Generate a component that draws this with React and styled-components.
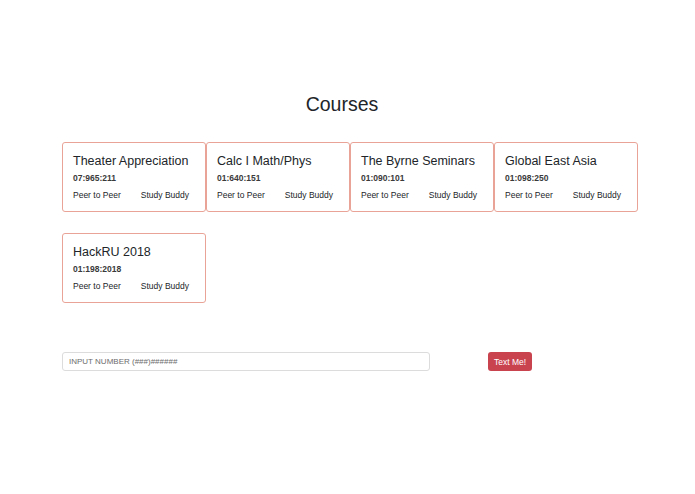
import React from "react";
import styled, { createGlobalStyle } from "styled-components";

const GlobalStyle = createGlobalStyle`
  html, body {
    margin: 0;
    padding: 0;
    background: #fff;
    font-family: "Liberation Sans", Arial, sans-serif;
    color: #212529;
  }
`;

const courses = [
  { name: "Theater Appreciation", code: "07:965:211" },
  { name: "Calc I Math/Phys", code: "01:640:151" },
  { name: "The Byrne Seminars", code: "01:090:101" },
  { name: "Global East Asia", code: "01:098:250" },
  { name: "HackRU 2018", code: "01:198:2018" }
];

const Page = styled.div`
  width: 576px;
  margin: 0 0 0 62px;
  padding-top: 92px;
`;

const Title = styled.h1`
  margin: 0 0 25px;
  padding-right: 16px;
  text-align: center;
  font-size: 19.5px;
  font-weight: 400;
  line-height: 25px;
`;

const Grid = styled.div`
  display: grid;
  grid-template-columns: repeat(4, 144px);
  row-gap: 21px;
`;

const Card = styled.div`
  height: 70px;
  box-sizing: border-box;
  border: 1px solid #e9a497;
  border-radius: 3px;
  padding: 10px 10px 0;
`;

const CardTitle = styled.div`
  font-size: 12.5px;
  line-height: 16px;
  font-weight: 400;
  margin-bottom: 3px;
`;

const Code = styled.div`
  font-size: 8.5px;
  font-weight: 700;
  color: #3a3a3a;
  line-height: 12px;
  margin-bottom: 5px;
`;

const Links = styled.div`
  display: flex;
  justify-content: space-between;
  padding-right: 6px;
  font-size: 8.5px;
  line-height: 12px;
`;

const Form = styled.div`
  display: flex;
  align-items: center;
  margin-top: 49px;
`;

const Input = styled.input`
  width: 368px;
  height: 19px;
  box-sizing: border-box;
  border: 1px solid #dcdcdc;
  border-radius: 3px;
  padding: 0 6px;
  font-family: inherit;
  font-size: 8px;
  color: #495057;
  &::placeholder {
    color: #6c6c6c;
  }
`;

const Button = styled.button`
  margin-left: 58px;
  height: 19px;
  box-sizing: border-box;
  border: none;
  border-radius: 3px;
  padding: 0 6px;
  background: #c9434f;
  color: #fff;
  font-family: inherit;
  font-size: 8.5px;
`;

const CourseCard = ({ name, code }) => (
  <Card>
    <CardTitle>{name}</CardTitle>
    <Code>{code}</Code>
    <Links>
      <span>Peer to Peer</span>
      <span>Study Buddy</span>
    </Links>
  </Card>
);

export default function App() {
  return (
    <>
      <GlobalStyle />
      <Page>
        <Title>Courses</Title>
        <Grid>
          {courses.map(c => (
            <CourseCard key={c.code} {...c} />
          ))}
        </Grid>
        <Form>
          <Input placeholder="INPUT NUMBER (###)######" />
          <Button>Text Me!</Button>
        </Form>
      </Page>
    </>
  );
}
